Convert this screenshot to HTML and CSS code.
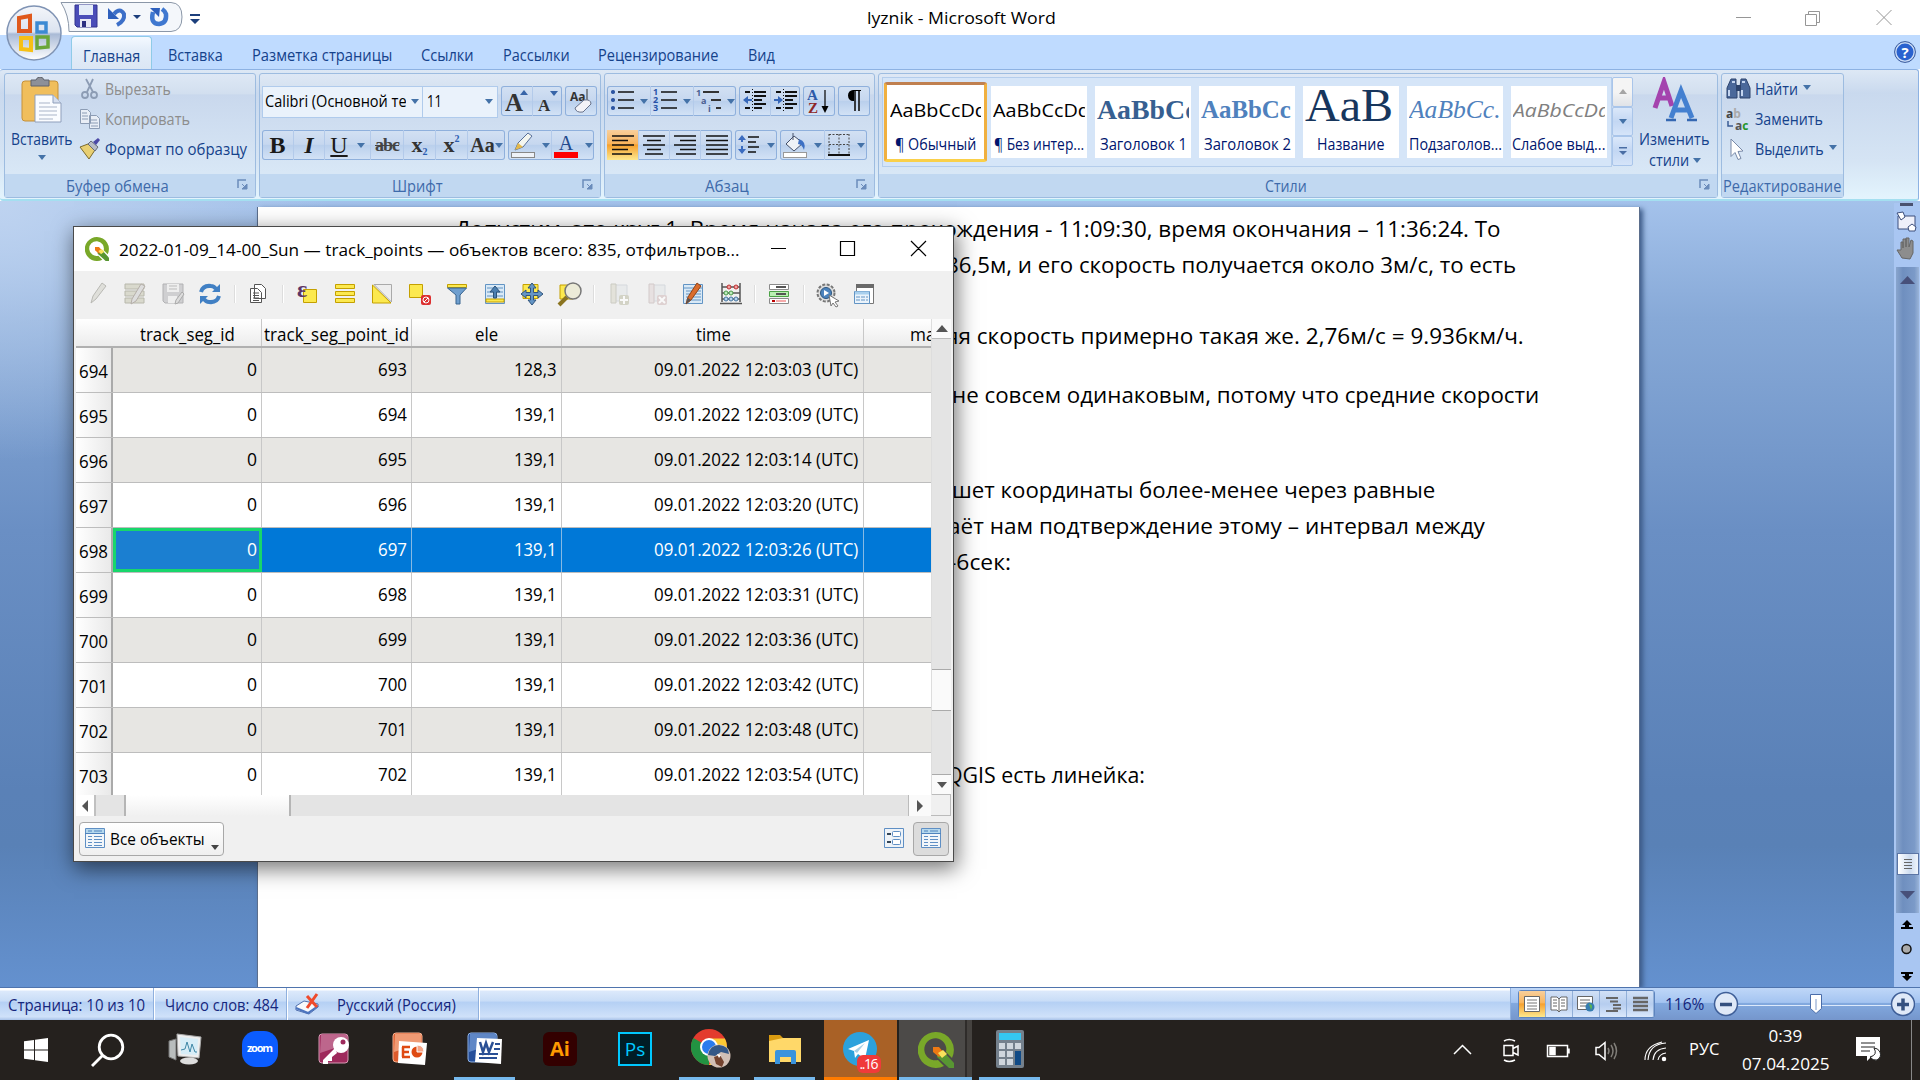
FILE: index.html
```html
<!DOCTYPE html>
<html lang="ru">
<head>
<meta charset="utf-8">
<title>lyznik - Microsoft Word</title>
<link rel="stylesheet" href="styles.css">
</head>
<body>
<div class="screen">
<header class="titlebar">
  <div class="qat">
    <svg width="130" height="35" viewBox="0 0 130 35"><path d="M1 2.500H111Q122 3 122 17T111 31.500H9Q9 15 1 2.500Z" fill="#f4f7fb" stroke="#8b97a8"/>
      <path d="M15 5h22v22h-20l-2-2z" fill="#4a4db8" stroke="#32358e"/><path d="M19 5h14v10H19z" fill="#e4ecf8"/><path d="M20 19h11v8H20z" fill="#e8e8f4"/><path d="M22 21h4v6h-4z" fill="#2d2f80"/>
      <path d="M54 14Q60 7 64 14Q65 21 57 25" fill="none" stroke="#3c6fc8" stroke-width="4"/><path d="M48 8v11h11z" fill="#2e60bd"/>
      <path d="M73 15h8l-4 4z" fill="#1c3f7c"/>
      <path d="M93 12Q90 24 99 24Q107 23 106 14Q105 11 102 9" fill="none" stroke="#3f78d0" stroke-width="4.500"/><path d="M90 8h10l-1 9z" fill="#2e60bd"/></svg>
    <svg class="qmore" width="12" height="12"><path d="M1 1h10v2H1zM1 6h10L6 11z" fill="#1c3f7c"/></svg>
  </div>
  <div class="apptitle"><span class="fit" data-w="189">lyznik - Microsoft Word</span></div>
  <svg class="winbtns" width="156" height="16" fill="none" stroke="#969696"><path d="M0 7.500h15M69.500 4.500h11v11h-11zM72.500 4.500v-3h11v11h-3M140.500 0l15 15M155.500 0l-15 15"/></svg>
</header>
<nav class="tabs">
  <div class="tab active"><span class="fit" data-w="57">Главная</span></div>
  <div class="tab"><span class="fit" data-w="55">Вставка</span></div>
  <div class="tab"><span class="fit" data-w="140">Разметка страницы</span></div>
  <div class="tab"><span class="fit" data-w="53">Ссылки</span></div>
  <div class="tab"><span class="fit" data-w="67">Рассылки</span></div>
  <div class="tab"><span class="fit" data-w="120">Рецензирование</span></div>
  <div class="tab"><span class="fit" data-w="27">Вид</span></div>
  <svg class="help" width="22" height="22"><circle cx="11" cy="11" r="9.500" fill="#2a62cf" stroke="#cbdcf5" stroke-width="2"/><circle cx="11" cy="11" r="10.400" fill="none" stroke="#33559a"/><text x="11" y="16.500" text-anchor="middle" font-size="15" font-weight="bold" fill="#fff">?</text></svg>
</nav>
<svg class="orb" width="58" height="58" viewBox="0 0 58 58"><defs><linearGradient id="orbg" x2="0" y2="1"><stop offset="0" stop-color="#f4f6fa"/><stop offset=".48" stop-color="#dbe3f0"/><stop offset=".52" stop-color="#a9bad6"/><stop offset="1" stop-color="#fff"/></linearGradient></defs><circle cx="29" cy="29" r="27" fill="url(#orbg)" stroke="#7f93b4" stroke-width="1.500"/><g fill="none" stroke-width="4"><path d="M14 14l11-2v15H14z" stroke="#e0591c"/><path d="M32 19h9v9h-9z" stroke="#3c8ad3" stroke-width="3.500"/><path d="M16 34h10v12l-10-1z" stroke="#f6c016"/><path d="M32 33h11v10l-11 1z" stroke="#6aa63a" stroke-width="3.500"/></g></svg>

<section class="ribbon">
  <div class="group g-clip">
    <div class="gbody clip">
      <div class="paste">
        <svg width="42" height="46" viewBox="0 0 42 46"><rect x="1" y="4" width="36" height="40" rx="3" fill="#f0be5c" stroke="#c5913a"/><path d="M10 3h5q1-3 4-3t4 3h5v6H10z" fill="#8d9098" stroke="#5e636c"/><path d="M14 18h18l8 8v19H14z" fill="#fafcff" stroke="#8f9fbb"/><path d="M32 18v8h8" fill="#d5deee" stroke="#8f9fbb"/><path d="M18 26h11M18 30h18M18 34h18M18 38h18M18 42h14" stroke="#a9b4c8"/></svg>
        <span class="fit" data-w="62">Вставить</span><i class="arr"></i>
      </div>
      <div class="clist">
        <div class="dis"><svg width="22" height="22" fill="none" stroke="#8c9cb4" stroke-width="1.800"><path d="M7 1l7 13M14 1L8 14"/><circle cx="6" cy="17" r="3"/><circle cx="15" cy="17" r="3"/></svg><span class="fit" data-w="66">Вырезать</span></div>
        <div class="dis"><svg width="22" height="22" fill="#e9eef6" stroke="#8c9cb4"><path d="M1.500 1.500h7l3 3v11h-10zM10.500 7.500h7l3 3v10h-10z"/><path d="M3 5h5M3 8h6M3 11h6M12 12h6M12 15h7M12 18h7"/></svg><span class="fit" data-w="85">Копировать</span></div>
        <div><svg width="22" height="22"><path d="M1 9l8-3 7 6-6 9z" fill="#e8cf72" stroke="#7b6a2c"/><path d="M9 6l3-3 7 6-3 4z" fill="#b8bcc6" stroke="#656a78"/><path d="M14 4l5-4 2 2-4 5z" fill="#4c49a6"/></svg><span class="fit" data-w="142">Формат по образцу</span></div>
      </div>
    </div>
    <div class="glabel"><span class="fit" data-w="103">Буфер обмена</span><svg class="launch" width="11" height="11"><use href="#launch"/></svg></div>
  </div>
  <div class="group g-font">
    <div class="gbody rows">
      <div class="row">
        <div class="combo c1"><span class="clipbox"><span class="fit" data-w="149">Calibri (Основной тек</span></span><i class="arr"></i></div>
        <div class="combo c2"><span class="fit" data-w="15">11</span><i class="arr"></i></div>
        <div class="bg m3"><b class="w31"><svg width="24" height="24"><text class="sf" x="0" y="22" font-size="25">A</text><path d="M15 6h8l-4-5z" fill="#3764a8"/></svg></b><b class="w30"><svg width="24" height="24"><text class="sf" x="2" y="22" font-size="17">A</text><path d="M14 2h8l-4 5z" fill="#3764a8"/></svg></b></div>
        <div class="bg m3"><b class="w32"><svg width="26" height="26"><text x="2" y="13" font-size="12" font-weight="bold" fill="#333">Aa</text><path d="M19 1v12" stroke="#333"/><path d="M7 20l9-8q7-1 7 4l-8 8q-7 1-8-4z" fill="#f3f3f8" stroke="#68728a"/></svg></b></div>
      </div>
      <div class="row second">
        <div class="bg serif"><b class="w31 bold">B</b><b class="w31 ital">I</b><b class="w48 und"><u>U</u><i class="arr"></i></b><b class="w33 small"><s>abc</s></b><b class="w32 xs">x<sub>2</sub></b><b class="w32 xs">x<sup>2</sup></b><b class="w37 aa">Aa<i class="arr"></i></b></div>
        <div class="bg m3"><b class="w43"><svg width="26" height="26"><path d="M5 18l3-7L18 1l4 3-9 11z" fill="#f4f6f0" stroke="#58709a"/><path d="M5 18l3-7 5 4z" fill="#e5b94b"/><rect x="1.500" y="20.500" width="23" height="5" fill="#eef2f8" stroke="#888"/></svg><i class="arr"></i></b><b class="w43"><svg width="26" height="26"><text class="sf2" x="13" y="18" text-anchor="middle" font-size="20">A</text><rect x="1" y="20" width="24" height="6" fill="red"/></svg><i class="arr"></i></b></div>
      </div>
    </div>
    <div class="glabel"><span class="fit" data-w="51">Шрифт</span><svg class="launch" width="11" height="11"><use href="#launch"/></svg></div>
  </div>
  <div class="group g-par">
    <div class="gbody rows">
      <div class="row first">
        <div class="bg"><b class="w44"><svg width="24" height="24" stroke="#111" stroke-width="1.500"><path d="M8 3h16M8 11h16M8 19h16"/><g fill="#3b6cc0" stroke="#274f9c"><circle cx="3" cy="3" r="1.300"/><circle cx="3" cy="11" r="1.300"/><circle cx="3" cy="19" r="1.300"/></g></svg><i class="arr"></i></b><b class="w44"><svg width="24" height="24"><path d="M8 3h16M8 11h16M8 19h16" stroke="#111" stroke-width="1.500"/><g font-size="9" font-weight="bold" fill="#2752a8"><text y="6">1</text><text y="14">2</text><text y="22">3</text></g></svg><i class="arr"></i></b><b class="w43"><svg width="26" height="24"><path d="M8 3h16M16 11h10M21 19h5" stroke="#333" stroke-width="1.800"/><g font-size="9" font-weight="bold" fill="#4a5f91"><text x="1" y="7">1</text><text x="6" y="15">a</text><text x="13" y="23">i</text></g></svg><i class="arr"></i></b></div>
        <div class="bg m3"><b class="w31"><svg width="24" height="24" stroke="#111" stroke-width="2"><path d="M2 3h5M11 3h12M11 7h12M11 11h8M2 19h5M11 15h12M11 19h8"/><path d="M2 11h7" stroke="#3566b8"/><path d="M5 7l-5 4 5 4z" fill="#3566b8" stroke="none"/><path d="M9.500 0v23" stroke-dasharray="1 2" stroke-width="1"/></svg></b><b class="w30"><svg width="24" height="24" stroke="#111" stroke-width="2"><path d="M2 3h5M11 3h12M11 7h12M11 11h8M2 19h5M11 15h12M11 19h8"/><path d="M0 11h6" stroke="#3566b8"/><path d="M4 7l5 4-5 4z" fill="#3566b8" stroke="none"/><path d="M9.500 0v23" stroke-dasharray="1 2" stroke-width="1"/></svg></b></div>
        <div class="bg m3"><b class="w32"><svg width="24" height="26"><text x="0" y="12" class="sf3" fill="#2d5aa8">A</text><text x="1" y="25" class="sf3" fill="#8e2727">Z</text><path d="M18 2v18" stroke="#111" stroke-width="1.300"/><path d="M14.500 18h7L18 25z"/></svg></b></div>
        <div class="bg m3"><b class="w32"><svg width="20" height="24"><path d="M15 2v20M11 2v20" stroke="#111" stroke-width="1.600"/><path d="M17 1H9a5 5.500 0 0 0 0 11h1V2h7z"/></svg></b></div>
      </div>
      <div class="row second">
        <div class="bg"><b class="w31 on"><svg width="24" height="22" class="ln"><path d="M1 2h22M1 6.500h16M1 11h22M1 15.500h16M1 20h20"/></svg></b><b class="w31"><svg width="24" height="22" class="ln"><path d="M1 2h22M5 6.500h14M1 11h22M5 15.500h14M3 20h18"/></svg></b><b class="w31"><svg width="24" height="22" class="ln"><path d="M1 2h22M7 6.500h16M1 11h22M7 15.500h16M3 20h20"/></svg></b><b class="w32"><svg width="24" height="22" class="ln"><path d="M1 2h22M1 6.500h22M1 11h22M1 15.500h22M1 20h22"/></svg></b></div>
        <div class="bg m3"><b class="w42"><svg width="24" height="24"><path d="M11 4h11M11 9h8M11 14h11M11 19h8" stroke="#111" stroke-width="1.600"/><path d="M5 4v15" stroke="#3b6cc0" stroke-width="2" stroke-dasharray="5 4"/><path d="M1 7l4-5 4 5zM1 16l4 5 4-5z" fill="#3b6cc0"/></svg><i class="arr"></i></b></div>
        <div class="bg m3"><b class="w44"><svg width="26" height="26"><path d="M4 12l8-8 9 7-9 8z" fill="#eef2f7" stroke="#44506a"/><path d="M11 8V1" stroke="#44506a"/><path d="M17 7q8 3 5 11-2-6-6-6z" fill="#3c6fc4"/><rect x="1.500" y="20.500" width="23" height="5" fill="#fff" stroke="#999"/></svg><i class="arr"></i></b><b class="w43"><svg width="24" height="24" fill="none" stroke="#444" stroke-dasharray="2 1.500"><path d="M2 1v20M12 1v20M22 1v20M2 1.500h20M2 11.500h20"/><path d="M1 22h22" stroke="#111" stroke-width="2" stroke-dasharray="none"/></svg><i class="arr"></i></b></div>
      </div>
    </div>
    <div class="glabel"><span class="fit" data-w="44">Абзац</span><svg class="launch" width="11" height="11"><use href="#launch"/></svg></div>
  </div>
  <div class="group g-sty">
    <div class="gbody styles">
      <div class="gallery">
        <div class="sty sel"><div class="smp"><span class="fit" data-w="97">AaBbCcDd</span></div><span class="fit sn" data-w="81">¶ Обычный</span></div>
        <div class="sty"><div class="smp"><span class="fit" data-w="97">AaBbCcDd</span></div><span class="fit sn" data-w="90">¶ Без интер...</span></div>
        <div class="sty h1"><div class="smp"><span class="fit" data-w="101">AaBbCc</span></div><span class="fit sn" data-w="87">Заголовок 1</span></div>
        <div class="sty h2"><div class="smp"><span class="fit" data-w="90">AaBbCc</span></div><span class="fit sn" data-w="87">Заголовок 2</span></div>
        <div class="sty tt"><div class="smp"><span class="fit" data-w="88">AaB</span></div><span class="fit sn" data-w="67">Название</span></div>
        <div class="sty st"><div class="smp"><span class="fit" data-w="92">AaBbCc.</span></div><span class="fit sn" data-w="93">Подзаголов...</span></div>
        <div class="sty em"><div class="smp"><span class="fit" data-w="97">AaBbCcDd</span></div><span class="fit sn" data-w="93">Слабое выд...</span></div>
      </div>
      <div class="gscroll"><b class="off"><svg width="8" height="5"><path d="M0 5h8L4 0z" fill="#a5a5a5"/></svg></b><b><i class="arr"></i></b><b><svg width="10" height="10"><path d="M1 1h8v1.500H1zM1 5h8L5 9z" fill="#4a6ea5"/></svg></b></div>
      <div class="chg"><svg width="46" height="46" viewBox="0 0 46 46"><g fill="none" stroke-width="5"><path d="M4 31L13 5l8 24M8 21h10" stroke="#a443ae"/><path d="M20 41L30 14l11 27M24 33h13" stroke="#4480d0"/></g><path d="M15 43h10M36 43h10" stroke="#3568b2" stroke-width="2.500"/></svg><span class="fit" data-w="70">Изменить</span><span class="l2"><span class="fit" data-w="40">стили</span><i class="arr"></i></span></div>
    </div>
    <div class="glabel"><span class="fit" data-w="42">Стили</span><svg class="launch" width="11" height="11"><use href="#launch"/></svg></div>
  </div>
  <div class="group g-edit">
    <div class="gbody elist">
      <div><svg width="25" height="22"><path d="M5 1h5v5l1 3v11H1V10z" fill="#4a689a" stroke="#2c436d"/><path d="M15 1h5l4 9v10H14V9z" fill="#4a689a" stroke="#2c436d"/><path d="M10 7h5v6h-5z" fill="#2c436d"/><path d="M3 12v6M16 12v6M6 4h3M16 4h3" stroke="#c3d4ef" stroke-width="2"/></svg><span class="fit" data-w="43">Найти</span><i class="arr"></i></div>
      <div><svg width="25" height="24"><text x="0" y="11" font-size="12" font-weight="bold" fill="#444">a<tspan fill="#aaa">b</tspan></text><text x="9" y="23" font-size="12" font-weight="bold" fill="#555">a<tspan fill="#24962c">c</tspan></text><path d="M2 14v5h5" fill="none" stroke="#3b5c94" stroke-width="1.500"/></svg><span class="fit" data-w="68">Заменить</span></div>
      <div><svg width="25" height="24"><path d="M5 2l12 12-5 .500 3 7-3 1-3-7-4 4z" fill="#fff" stroke="#7889a8"/></svg><span class="fit" data-w="69">Выделить</span><i class="arr"></i></div>
    </div>
    <div class="glabel"><span class="fit" data-w="118">Редактирование</span></div>
  </div>
</section>

<main class="work">
  <article class="page">
    <p><span class="fit" data-w="1046">Допустим, это круг 1. Время начала его прохождения - 11:09:30, время окончания – 11:36:24. То</span></p>
    <p class="off"><span class="fit" data-w="570">86,5м, и его скорость получается около 3м/с, то есть</span></p>
    <p class="off g35"><span class="fit" data-w="578">яя скорость примерно такая же. 2,76м/с = 9.936км/ч.</span></p>
    <p class="off g24 s6"><span class="fit" data-w="587">не совсем одинаковым, потому что средние скорости</span></p>
    <p class="off g59 s7"><span class="fit" data-w="483">шет координаты более-менее через равные</span></p>
    <p class="off s2"><span class="fit" data-w="537">аёт нам подтверждение этому – интервал между</span></p>
    <p class="off s4"><span class="fit" data-w="62">-6сек:</span></p>
    <p class="off g178"><span class="fit" data-w="199">QGIS есть линейка:</span></p>
  </article>
  <aside class="vs">
    <svg width="26" height="64"><path d="M6 0h13v3H6z" fill="#4a5270"/><path d="M4 13h17v13H4z" fill="#eef0fa" stroke="#3d4f7c"/><path d="M3 10l6-1 2 5-4 3zM14 24l4-3 4 3-1 4h-6z" fill="#fff" stroke="#3d4f7c"/><path d="M8 55L3 47l4 0V39h2v6V36h3v8V35h3v9l2-7 2 1v12l-3 6z" fill="#8d8d8d" stroke="#666"/></svg>
    <div class="track"><svg width="16" height="9"><path d="M0 8h15L7.500 0z" fill="#47507a"/></svg><div class="vthumb"><i></i><i></i><i></i><i></i></div><svg width="16" height="9"><path d="M0 0h15L7.500 8z" fill="#47507a"/></svg></div>
    <div class="vnav"><svg width="26" height="76"><path d="M8 12l5-5 5 5h-3v2h4v2H7v-2h4v-2zM7 59h12v2h-4v2h3l-5 5-5-5h3v-2H7z"/><circle cx="12.500" cy="36" r="4.500" fill="#aaa" stroke="#111" stroke-width="1.500"/></svg></div>
  </aside>
</main>

<footer class="status">
  <div class="st1"><span class="fit" data-w="137">Страница: 10 из 10</span></div>
  <div class="st2"><span class="fit" data-w="113">Число слов: 484</span></div>
  <div class="st3"><svg width="26" height="24"><path d="M1 13l8-5 14 3v3l-9 7-13-4z" fill="#f7f9fc" stroke="#4f6fae"/><path d="M1 15l12 5 10-7" fill="none" stroke="#4b74bf" stroke-width="2"/><path d="M12 3l10 11M22 1L12 15" stroke="#ef4a2c" stroke-width="3"/></svg><span class="fit" data-w="119">Русский (Россия)</span></div>
  <div class="st4"></div>
  <div class="zone">
    <div class="views"><b class="on"><svg width="18" height="18"><path d="M1.500 1.500h15v15h-15z" fill="#fff" stroke="#666"/><path d="M4 5h10M4 8h10M4 11h10M4 14h10" stroke="#777"/></svg></b><b><svg width="18" height="18"><path d="M1 2h6l2 2 2-2h6v13h-6l-2 2-2-2H1z" fill="#fff" stroke="#666"/><path d="M3 5h4M3 8h4M3 11h4M11 5h4M11 8h4M11 11h4M9 4v12" stroke="#666"/></svg></b><b><svg width="20" height="18"><path d="M1.500 1.500h15v13h-15z" fill="#fff" stroke="#666"/><path d="M4 5h10M4 8h10M4 11h6" stroke="#666"/><circle cx="14" cy="12" r="4.500" fill="#367db0"/><path d="M13 9q5 0 2 6z" fill="#58b454"/></svg></b><b><svg width="18" height="18"><path d="M2 3h12M6 6.500h8M9 10h8M9 13.500h8M2 16h12" stroke="#666" stroke-width="1.800"/></svg></b><b><svg width="18" height="18"><path d="M2 3h15M2 7h15M2 11h15M2 15h15" stroke="#666" stroke-width="2.500"/></svg></b></div>
    <span class="fit pct" data-w="39">116%</span>
    <svg width="204" height="30"><path d="M26 16.500h160" stroke="#dce9fb"/><g fill="#dfe9f8" stroke="#3f5f98" stroke-width="1.500"><circle cx="15" cy="15" r="11.500"/><circle cx="192" cy="15" r="11.500"/></g><path d="M9 15.500h12M186 15.500h12M192 9.500v12" stroke="#34507f" stroke-width="3.500"/><path d="M99.500 5.500h11v14l-5.500 5-5.500-5z" fill="#fff" stroke="#4a6daa"/><path d="M105 10v11" stroke="#7c99c9"/></svg>
  </div>
</footer>

<footer class="taskbar">
  <b class="tk"><svg width="24" height="24" fill="#fff"><path d="M0 3.300l10-1.400v9.600H0zM11 1.800L24 0v11.500H11zM0 12.500h10v9.600L0 20.700zM11 12.500h13V24l-13-1.800z"/></svg></b>
  <b class="tk srch"><svg width="34" height="34" fill="none" stroke="#fff" stroke-width="2.800"><circle cx="20" cy="14" r="11.800"/><path d="M12 22L1 33"/></svg></b>
  <b class="tk"><svg width="34" height="32"><path d="M1 8l7-2v21l-7-3z" fill="#b9bdbd" stroke="#777"/><path d="M9 1l24 3-2 21-21-2z" fill="#eee" stroke="#aaa"/><path d="M12 4l18 2-1 16-16-1z" fill="#d7edf7"/><path d="M13 17l4-1 2-7 3 10 2-8 3 8h2" fill="none" stroke="#3f87a6"/><ellipse cx="21" cy="28" rx="9" ry="3.500" fill="#ddd"/></svg></b>
  <b class="tk"><svg width="36" height="36"><rect width="36" height="36" rx="14" fill="#0b5cff"/><text x="18" y="21" text-anchor="middle" font-size="11" font-weight="bold" fill="#fff" textLength="26">zoom</text></svg></b>
  <b class="tk"><svg width="34" height="32"><rect x="1" y="1" width="29" height="29" rx="3" fill="#9e2a5c" stroke="#d99ab5"/><path d="M3 2h26v9L2 20z" fill="#bd668c"/><path d="M17 15L5 27v4h5v-3h4v-4l5-4" fill="#fff"/><circle cx="23" cy="12" r="8" fill="#fff"/><circle cx="25" cy="9" r="2.500" fill="#9e2a5c"/></svg></b>
  <b class="tk"><svg width="36" height="34"><rect x="1" y="1" width="29" height="29" rx="3" fill="#dd5b2c" stroke="#f3b190"/><path d="M3 2h26v9L2 20z" fill="#ef9a74"/><path d="M7 9l28 2-2 22-27-2z" fill="#fff"/><path d="M10 15h8M10 20h7M10 25h8M11 15v10" stroke="#df4a12" stroke-width="2.500"/><circle cx="25" cy="20" r="5.500" fill="#df4a12"/><path d="M25 20V13q7 0 7 7z" fill="#f4a587" stroke="#fff"/></svg></b>
  <b class="tk run"><svg width="36" height="34"><rect x="1" y="1" width="29" height="29" rx="3" fill="#264f9a" stroke="#8fb2e4"/><path d="M3 2h26v9L2 20z" fill="#5f87c6"/><path d="M10 6l25 1-1 25-26-2z" fill="#fff"/><path d="M13 10l3 10 3-9 3 9 4-10" fill="none" stroke="#2a4f94" stroke-width="2.500"/><path d="M12 22h19M12 26h18M27 17h6M28 12h5" stroke="#2a4f94" stroke-width="2"/></svg></b>
  <b class="tk"><svg width="34" height="34"><rect width="34" height="34" rx="6" fill="#330000"/><text x="17" y="24" text-anchor="middle" font-size="20" font-weight="bold" fill="#ff9a00">Ai</text></svg></b>
  <b class="tk"><svg width="34" height="34"><rect x="1" y="1" width="32" height="32" fill="#001d26" stroke="#00c8ff" stroke-width="2"/><text x="17" y="24" text-anchor="middle" font-size="19" font-weight="500" fill="#00c8ff">Ps</text></svg></b>
  <b class="tk run r1"><svg width="40" height="40" viewBox="0 0 40 40"><circle cx="18" cy="18" r="18" fill="#e33b2e"/><path d="M18 18L2.400 9A18 18 0 0 0 18 36z" fill="#229342"/><path d="M18 9.500h15.800A18 18 0 0 1 18 36L26 22z" fill="#fcc934"/><circle cx="18" cy="18" r="9" fill="#fff"/><circle cx="18" cy="18" r="7" fill="#2a7bee"/><circle cx="28" cy="27" r="11.500" fill="#d2c0b6"/><path d="M17 26q2-10 11-10 10 1 10 9l-8-2-6 4z" fill="#355887"/><path d="M23 28l6-2 4 7-2 5-6-3z" fill="#74432f"/><path d="M26 25l4 1-2 3z" fill="#fff"/></svg></b>
  <b class="tk run"><svg width="34" height="30"><path d="M1 1h11l3 3v6H1z" fill="#d99b10"/><path d="M1 7l14-3h18v24H1z" fill="#ffd869"/><path d="M7 30V18q0-2 2-2h17q2 0 2 2v12h-5v-7H12v7z" fill="#3a93dd"/></svg></b>
  <b class="tk tg"><svg width="42" height="42"><circle cx="18" cy="18" r="17" fill="#2ca1dc"/><path d="M6 18l21-9-4 19-7-5-3 4-1-7z" fill="#fff"/><path d="M12 20l11-8-8 10z" fill="#a7cfe5"/><rect x="15" y="24" width="24" height="18" rx="6" fill="#f03a3a"/><text x="27" y="38" text-anchor="middle" font-size="14" fill="#fff" textLength="19">..16</text></svg></b>
  <b class="tk qg"><svg width="36" height="36" viewBox="0 0 36 36"><use href="#qgis"/></svg></b>
  <b class="tk run"><svg width="28" height="38"><rect width="28" height="38" rx="2" fill="#74808c"/><rect x="3" y="3" width="22" height="7" fill="#35c7f3"/><g fill="#cfd6dd"><path d="M3 13h6v6H3zM11 13h6v6h-6zM19 13h6v6h-6zM3 21h6v6H3zM11 21h6v6h-6zM3 29h6v6H3zM11 29h6v6h-6z"/></g><path d="M19 21h6v14h-6z" fill="#104a86"/></svg></b>
  <div class="tray">
    <svg width="220" height="30" fill="none" stroke="#fff" stroke-width="1.500"><path d="M1 19l8.500-8.500L18 19"/><path d="M51 10.500h9v10h-9zM60 13.500l5-2.500v9l-5-2.500M51 6q5-3 11 0M51 25q5 3 11 0"/><path d="M94.500 10.500h20v11h-20zM116 13.500v5"/><path d="M97 12.500h5v7h-5z" fill="#fff"/><path d="M143 12.500h3l6-5v17l-6-5h-3z"/><path d="M155 13q2 3 0 6M158 10q4 6 0 12M161 8q5 8 0 16" stroke="#817e79"/><g transform="translate(191 3)"><path d="M4 22Q5 6 22 5M9 22Q10 11 22 10M14 22Q15 16 22 15M1 22Q1 8 18 4" stroke-width="1.100"/><circle cx="20" cy="21" r="1.500" fill="#fff"/></g></svg>
    <span class="fit lang" data-w="30">РУС</span>
    <div class="clock"><span class="fit" data-w="34">0:39</span><span class="fit" data-w="88">07.04.2025</span></div>
    <svg width="26" height="26"><path d="M0 0h24v19H16l-5 5v-5H0z" fill="#fff"/><path d="M5 6h14M5 10h14M5 14h9" stroke="#222"/><path d="M18 11q4 7-4 9 3 4 7 3 5-3 3-8-2-4-6-4z" fill="#fff" stroke="#222"/></svg>
    <i class="peek"></i>
  </div>
</footer>

<section class="dialog">
  <div class="dtitle">
    <svg width="24" height="24" viewBox="0 0 36 36"><use href="#qgis"/></svg>
    <span class="fit" data-w="621">2022-01-09_14-00_Sun — track_points — объектов всего: 835, отфильтров...</span>
    <svg class="dbtn" width="158" height="18" fill="none" stroke="#000" stroke-width="1.200"><path d="M1 8.500h15M70.500 1.500h14v14h-14zM141 1l15 15M156 1l-15 15"/></svg>
  </div>
  <div class="dtools" id="tools">
    <b><svg><path d="M4 20l2-7L15 0l4 3L9 16z" fill="#dfdfda" stroke="#b9b9b4"/></svg></b>
    <b><svg><g fill="#d9d9cd" stroke="#b8b8ac"><path d="M1 1h19v5H1zM1 8h19v5H1zM1 15h19v5H1z"/></g><path d="M7 21l1-5L17 1l4 2-9 15z" fill="#ddd" stroke="#b5afa9"/></svg></b>
    <b><svg><path d="M1 1h20v19H3l-2-2z" fill="#cfcfd1" stroke="#b2b2b4"/><path d="M5 1h12v8H5zM6 13h9v7H6z" fill="#eee"/><path d="M7 3h8M7 6h8" stroke="#bbb"/><path d="M13 21l1-4 6-8 2 2-6 9z" fill="#ddd" stroke="#aaa"/></svg></b>
    <b><svg fill="none" stroke="#4180c4" stroke-width="4"><path d="M2 9q2-7 10-6 3 0 5 3M20 13q-2 7-10 6-3 0-5-3"/><path d="M21 1v8h-8zM1 21v-8h8z" fill="#4180c4" stroke="none"/></svg></b>
    <i class="sep"></i>
    <b><svg fill="#fff" stroke="#555"><path d="M6.500 1.500h7l4 4v10h-11zM2.500 5.500h7l4 4v10h-11z"/><path d="M5 10h6M5 12.500h6M5 15h6M5 17.500h6"/></svg></b>
    <i class="sep"></i>
    <b><svg><path d="M7.500 6.500h13v13h-13z" fill="#fce94f" stroke="#c4a000"/><text x="1" y="14" class="eps">ε</text></svg></b>
    <b><svg fill="#fce94f" stroke="#c4a000"><path d="M1.500 1.500h19v4h-19zM1.500 8.500h19v4h-19zM1.500 15.500h19v4h-19z"/></svg></b>
    <b><svg><path d="M1.500 2v18H20z" fill="#fce94f" stroke="#c4a000"/><path d="M3 1.500h17.500V19z" fill="#eee" stroke="#aaa"/></svg></b>
    <b><svg><path d="M.500 1.500h13v13H.500z" fill="#fce94f" stroke="#c4a000"/><rect x="12" y="12" width="10" height="10" rx="2" fill="#dc3030"/><circle cx="17" cy="17" r="3" fill="none" stroke="#fff"/><path d="M15 19l4-4" stroke="#fff"/></svg></b>
    <b><svg><path d="M1.500 1.500h19v3h-19z" fill="#fce94f" stroke="#c4a000"/><path d="M1.500 5h19L14 12v9h-4v-9z" fill="#6f9fcf" stroke="#39648f"/></svg></b>
    <b><svg><path d="M1.500 1.500h19v19h-19z" fill="#d9e9f6" stroke="#6294c4"/><path d="M3 5h16M3 9h16M3 13h16" stroke="#6294c4"/><path d="M2 16h18v3H2z" fill="#fce94f" stroke="#c4a000"/><path d="M9.500 15V9H6l5-6 5 6h-3.500v6z" fill="#4b7fb1" stroke="#2d5379"/></svg></b>
    <b><svg><path d="M2 1.500h15v14H2z" fill="#fce94f" stroke="#c4a000"/><path d="M11 0l4 5h-2.500v4.500H17V7l5 4-5 4v-2.500h-4.500V17H15l-4 5-4-5h2.500v-4.500H5V15l-5-4 5-4v2.500h4.500V5H7z" fill="#6495c5" stroke="#31557c"/></svg></b>
    <b><svg width="24"><path d="M1 2h13v14H1z" fill="#fce94f" stroke="#c4a000"/><path d="M0 22l8-8" stroke="#8b7420" stroke-width="4"/><circle cx="14" cy="8" r="8" fill="#ecebd8" stroke="#777" stroke-width="1.500"/></svg></b>
    <i class="sep"></i>
    <b><svg opacity=".65"><path d="M7 2h13v16H7z" fill="#e4e7e9" stroke="#c7cdd3"/><path d="M4 1h5v19H4z" fill="#dddccf" stroke="#b9b8ac"/><rect x="12" y="12" width="10" height="10" rx="2" fill="#c5c4b1"/><path d="M17 13v8M13 17h8" stroke="#fff" stroke-width="2"/></svg></b>
    <b><svg opacity=".65"><path d="M7 2h13v16H7z" fill="#e4e7e9" stroke="#c7cdd3"/><path d="M4 1h5v19H4z" fill="#e3dada" stroke="#c4b6b6"/><rect x="12" y="12" width="10" height="10" rx="2" fill="#d5c2c2"/><path d="M14 14l6 6M20 14l-6 6" stroke="#fff" stroke-width="2"/></svg></b>
    <b><svg><path d="M1.500 1.500h19v19h-19z" fill="#d9e9f6" stroke="#6294c4"/><path d="M2 5h18M4 8h15M4 11h15M4 14h15M4 17h15" stroke="#6294c4"/><path d="M4 21l2-7L15 0l4 3L9 17z" fill="#d96c2d" stroke="#914317"/><path d="M4 21l2-6 3 2z" fill="#555"/></svg></b>
    <b><svg fill="none" stroke="#555"><path d="M2 0v19M20 0v19M2 4h18M2 10h18M2 16h18M0 20.500h22" stroke-width="1.500"/><g fill="#f3a0a0" stroke="#bd3030"><circle cx="9" cy="4" r="2"/><circle cx="16" cy="4" r="2"/></g><g fill="#bdebbd" stroke="#4b9a4b"><circle cx="6" cy="10" r="2"/><circle cx="11" cy="10" r="2"/></g><g fill="#b7d4ef" stroke="#46759f"><circle cx="6" cy="16" r="2"/><circle cx="11" cy="16" r="2"/><circle cx="16" cy="16" r="2"/></g></svg></b>
    <i class="sep"></i>
    <b><svg><g fill="#fff" stroke="#8a8a8a"><path d="M1.500 1.500h19v5h-19zM1.500 15.500h19v5h-19z"/><path d="M1.500 8.500h19v5h-19z" fill="#baf0b2" stroke="#4ba346"/></g><path d="M8 4h10M8 11h10" stroke="#555" stroke-width="2"/><path d="M4 18h3" stroke="#b00" stroke-width="2"/><path d="M8 18h10" stroke="#f5aaaa" stroke-width="2"/></svg></b>
    <i class="sep"></i>
    <b><svg><circle cx="9" cy="10" r="8.500" fill="#ddd" stroke="#777" stroke-width="2" stroke-dasharray="3 1.500"/><circle cx="9" cy="10" r="5.500" fill="#4c83bd" stroke="#2d5780"/><path d="M7 7l5 3-5 3z" fill="#fff"/><path d="M12 12l10 6-4 1 3 4-2 1-3-4-2 3z" fill="#fff" stroke="#777"/></svg></b>
    <b><svg><path d="M2.500 2.500h17v18h-17z" fill="#fff" stroke="#777"/><path d="M2 1h18v4H2z" fill="#6a6a6a"/><path d="M.500 8.500h15v12h-15z" fill="#eaf3fb" stroke="#6294c4"/><path d="M1 10h14" stroke="#a9d0ee" stroke-width="3"/><path d="M2 14h12M2 17h12" stroke="#6294c4" stroke-dasharray="4 1"/></svg></b>
  </div>
  <div class="grid">
    <div class="tbl" id="tbl">
      <div class="tr th"><div class="rh"></div><div class="c1"><span class="fit" data-w="95">track_seg_id</span></div><div class="c2"><span class="fit" data-w="145">track_seg_point_id</span></div><div class="c3"><span class="fit" data-w="23">ele</span></div><div class="c4"><span class="fit" data-w="35">time</span></div><div class="c5"><span class="fit" data-w="60">magvar</span></div></div>
    </div>
    <div class="dv"><b><svg width="12" height="7"><path d="M0 7h12L6 0z" fill="#555"/></svg></b><div class="dvt"></div><div class="dvk"></div><div class="dvt2"></div><b><svg width="10" height="6"><path d="M0 0h10L5 6z" fill="#555"/></svg></b></div>
  </div>
  <div class="dh"><b class="hl"><svg width="6" height="12"><path d="M6 0v12L0 6z" fill="#555"/></svg></b><div class="ht"></div><div class="hk"></div><div class="hr"></div><b class="hb"><svg width="6" height="12"><path d="M0 0v12l6-6z" fill="#555"/></svg></b><div class="hc"></div></div>
  <div class="dfoot">
    <div class="allobj"><svg width="20" height="20"><use href="#tblico"/></svg><span class="fit" data-w="95">Все объекты</span><svg class="dn" width="8" height="5"><path d="M0 0h8L4 5z" fill="#444"/></svg></div>
    <div class="fmode"><svg width="20" height="20" fill="#fff" stroke="#5f8fc4"><path d="M.500.500h19v19H.500z" fill="#eef3f8"/><rect x="8.500" y="3.500" width="8" height="5" rx="1"/><rect x="8.500" y="11.500" width="8" height="5" rx="1"/><path d="M3 6h4M3 14h4" stroke="#345" stroke-width="2"/></svg></div>
    <div class="tmode"><svg width="20" height="20"><use href="#tblico"/></svg></div>
  </div>
</section>
</div>
<svg width="0" height="0" class="defs">
  <symbol id="launch" viewBox="0 0 11 11"><path d="M1 9V1h8" fill="none" stroke="#6b8cbb" stroke-width="1.500"/><path d="M10 5v5H5zM5 5l4 4" stroke="#6b8cbb" fill="#6b8cbb"/></symbol>
  <symbol id="qgis" viewBox="0 0 36 36"><path d="M18 0a18 18 0 1 0 8 34l-6-6a11 11 0 1 1 8-8l6 6A18 18 0 0 0 18 0z" fill="#79a829"/><path d="M19 19h6l11 12v5h-5L19 25z" fill="#589632"/><path d="M15 15h6l5 6-5 4-6-5z" fill="#ee7913"/><path d="M20 21l5-3 4 4-5 4z" fill="#f8e25c"/></symbol>
  <symbol id="tblico" viewBox="0 0 20 20"><path d="M.500.500h19v19H.500z" fill="#f2f6fa" stroke="#5f8fc4"/><path d="M1 1h18v4H1z" fill="#b5d8ee"/><path d="M3 3h4M9 3h8M0 5.500h20" stroke="#4f83bd"/><path d="M3 8.500h4M9 8.500h8M3 11.500h4M9 11.500h8M3 14.500h4M9 14.500h8M3 17.500h4M9 17.500h8" stroke="#5f8fc4"/></symbol>
</svg>
<script src="app.js"></script>
</body>
</html>
```
FILE: styles.css
```css
* { box-sizing: border-box; }
body { margin: 0; font-family: "Open Sans", "Noto Sans", sans-serif; font-size: 15.5px; color: #000; overflow: hidden; }
.screen { position: relative; width: 1920px; height: 1080px; display: flex; flex-direction: column; overflow: hidden; }
.fit { display: inline-block; white-space: pre; transform-origin: 0 50%; flex: none; }
b { font-weight: normal; display: flex; align-items: center; justify-content: center; }
i { display: block; font-style: normal; }
svg { flex: none; display: block; }
.defs { position: absolute; }
.arr { width: 0; height: 0; border: 4px solid transparent; border-top: 5px solid #4472a8; border-bottom: 0; flex: none; }

.titlebar { height: 35px; background: #fff; display: flex; align-items: center; padding-right: 28px; flex: none; }
.qat { width: 867px; padding-left: 60px; display: flex; align-items: center; height: 35px; }
.qmore { margin: 2px 0 0 -1px; }
.apptitle { flex: 1; font-size: 16px; padding-top: 1px; }
.tabs { height: 34px; background: #bfdbff; display: flex; align-items: center; flex: none; color: #15428b; font-size: 16px; padding-left: 71px; }
.tab { margin-right: 29px; height: 34px; display: flex; align-items: center; padding-top: 6px; }
.tab.active { width: 81px; height: 34px; justify-content: center; margin: 2px 16px 0 0; padding-top: 4px; background: linear-gradient(#f4f9ff, #e3edf9 40%, #dbe6f4); border: 1px solid #8fcbe8; border-bottom: 0; border-radius: 4px 4px 0 0; }
.help { margin-left: auto; margin-right: 4px; }
.orb { position: absolute; left: 5px; top: 4px; }

.ribbon { height: 132px; flex: none; margin-right: 1px; padding: 3px 0 1px 4px; display: flex; gap: 3px; border: 1px solid #8db2e3; border-width: 1px 1px 2px 0; border-bottom-color: #a4dff0; border-radius: 3px; background: linear-gradient(#dde8f5, #c9d9ee 18%, #d5e4f4 70%, #e3f4fd); color: #15428b; }
.group { border: 1px solid #9dbce0; border-radius: 3px; display: flex; flex-direction: column; background: linear-gradient(#dee8f5, #d2dfef 16%, #c9d8ed 17%, #d8e7f6 80%); height: 125px; }
.g-clip { width: 252px; } .g-font { width: 342px; } .g-par { width: 271px; } .g-sty { width: 840px; } .g-edit { width: 123px; }
.gbody { height: 100px; display: flex; }
.glabel { height: 23px; background: #c1d8f1; display: flex; justify-content: center; align-items: center; color: #3e6aaa; padding: 1px 25px 0 0; position: relative; }
.g-edit .glabel { padding-right: 0; }
.launch { position: absolute; right: 7px; top: 5px; }
.paste { width: 74px; display: flex; flex-direction: column; align-items: center; padding-top: 3px; line-height: 20px; }
.paste .fit { margin-top: 6px; }
.paste .arr { margin-top: 6px; }
.clist > div { display: flex; align-items: center; height: 30px; gap: 4px; }
.dis { color: #8d8d8d; }
.rows { flex-direction: column; padding: 12px 0 0 2px; }
.row { display: flex; height: 32px; }
.second { margin-top: 12px; }
.m3 { margin-left: 3px; }
.bg { display: flex; flex: none; height: 30px; box-shadow: inset 0 0 0 1px #8fb0dc; border-radius: 3px; background: linear-gradient(#d3e1f3, #c6d7ef 48%, #b9cfec 50%, #d4e3f6); }
.bg b { border-left: 1px solid #b3caea; gap: 6px; color: #1a1a1a; flex: none; }
.bg b:first-child { border-left: 0; }
.w30 { width: 30px; } .w31 { width: 31px; } .w32 { width: 32px; } .w33 { width: 33px; } .w37 { width: 38px; } .w42 { width: 42px; } .w43 { width: 43px; } .w44 { width: 44px; } .w48 { width: 46px; }
.first .w44 { width: 43px; }
.combo { height: 32px; background: #eaf2fb; border: 1px solid #b0cbec; display: flex; align-items: center; justify-content: space-between; padding: 0 3px 2px 2px; color: #000; }
.c1.combo { width: 161px; } .c2.combo { width: 75px; border-left: 0; padding: 0 4px 2px 4px; }
.clipbox { width: 141px; overflow: hidden; height: 22px; }
.serif b { font-family: "Liberation Serif", serif; font-size: 24px; gap: 9px; line-height: 28px; }
.serif .bold, .ital { font-weight: bold; }
.serif .ital { font-style: italic; }
.serif .small { font-size: 18px; font-weight: bold; color: #444; letter-spacing: -1px; }
.serif .xs { font-size: 22px; font-weight: bold; gap: 0; color: #333; }
.xs sub, .xs sup { font-size: 10px; color: #2a5db0; line-height: 10px; }
.xs sub { margin-top: 14px; } .xs sup { margin-bottom: 12px; }
.serif .aa { font-size: 20px; font-weight: bold; gap: 0; color: #333; }
.sf { font-family: "Liberation Serif", serif; font-weight: bold; fill: #333; }
.sf2 { font-family: "Liberation Serif", serif; fill: #234a8c; }
.sf3 { font-family: "Liberation Serif", serif; font-size: 15px; font-weight: bold; }
.ln { stroke: #111; stroke-width: 1.7; }
.on { background: linear-gradient(#f8cf9c, #f9b55d 45%, #f6a12f 50%, #fde88e); }
.styles { padding: 3px 0 0 3px; }
.gallery { width: 730px; height: 90px; border: 1px solid #b4cdec; background: #d5e5f8; display: flex; gap: 8px; padding: 4px 0 0 1px; flex: none; }
.sty { width: 96px; height: 72px; margin-top: 4px; background: #fff; display: flex; flex-direction: column; align-items: center; padding: 0 2px; overflow: hidden; color: #00156e; flex: none; }
.sty.sel { width: 103px; height: 80px; margin: 0 -4px 0 0; border: 3px solid #f0b040; border-top-color: #c08050; border-bottom-color: #fad04a; border-radius: 3px; padding: 1px 3px; }
.smp { height: 48px; width: 100%; overflow: hidden; display: flex; align-items: center; font-size: 19px; color: #000; line-height: 40px; flex: none; }
.sn { line-height: 20px; }
.h1 .smp, .h2 .smp { font: bold 27px/40px "Liberation Serif", serif; color: #365f91; }
.h2 .smp { color: #4f81bd; font-size: 26px; }
.tt .smp { font: 47px/44px "Liberation Serif", serif; color: #17365d; align-items: flex-start; }
.tt .smp .fit { margin-top: -3px; }
.st .smp { font: italic 25px/40px "Liberation Serif", serif; color: #4f81bd; }
.em .smp { font-style: italic; color: #808080; }
.gscroll { width: 21px; height: 89px; display: flex; flex-direction: column; flex: none; }
.gscroll b { flex: 1; border: 1px solid #a9c5ea; background: linear-gradient(#dbe8fa, #c3d7f3 50%, #d5e4f9); border-radius: 2px; }
.gscroll .off { background: linear-gradient(#f4f4f4 50%, #e0e3e8); }
.chg { width: 82px; display: flex; flex-direction: column; align-items: center; line-height: 21px; }
.chg > .fit { margin-top: 6px; }
.l2 { display: flex; align-items: center; gap: 3px; padding-left: 2px; }
.elist { flex-direction: column; padding: 0 0 0 4px; }
.elist div { height: 30px; display: flex; align-items: center; gap: 4px; }
.elist .arr { margin: -4px 0 0 1px; }

.work { height: 786px; flex: none; display: flex; justify-content: flex-end; background: radial-gradient(ellipse 330px 260px at 0 0, #bed3f0 0, #a9c4e800 100%), linear-gradient(#a4c2eb, #87a9d7 15%, #6a8fc4 42%, #5a81b7 75%, #5981b6 82%, #6491cf 100%); padding-top: 6px; }
.page { width: 1383px; background: #fff; border: 1px solid #5b6e8c; border-width: 0 1px; box-shadow: 3px 2px 5px #3c5a88; margin: 0 254px 0 0; padding: 4px 0 0 197px; font-size: 21px; flex: none; }
.page p { margin: 0; height: 36px; line-height: 36px; }
.page .off { padding-left: 491px; }
.page .g35 { margin-top: 35px; } .page .g24 { margin-top: 23px; } .page .g59 { margin-top: 59px; } .page .g178 { margin-top: 177px; }
.page .s6, .page .s7 { padding-left: 497px; } .page .s2 { padding-left: 493px; } .page .s4 { padding-left: 494px; }
.vs { width: 26px; background: #a9c6f2; margin-top: -4px; display: flex; flex-direction: column; flex: none; }
.track { margin: 0 1px 0 2px; height: 646px; background: linear-gradient(90deg, #89a5cd, #6f8fbf 30%, #7b9ac8 80%, #9ab4d8); display: flex; flex-direction: column; align-items: center; padding: 9px 0; flex: none; }
.vthumb { margin: 568px 0 16px; width: 22px; height: 22px; border: 1px solid #5b75a5; background: linear-gradient(90deg, #fff, #cddcf0 60%, #eef4fb); display: flex; flex-direction: column; align-items: center; gap: 2px; padding-top: 5px; flex: none; }
.vthumb i { width: 8px; height: 1px; background: #666; flex: none; }

.status { height: 33px; flex: none; border-top: 1px solid #4f74ad; background: linear-gradient(#fff 0 2px, #dce9fb 3px, #c9ddf7 40%, #b5d0f4 45%, #cfe1f9 90%, #a8c2e8); display: flex; color: #15267c; }
.status > div { display: flex; align-items: center; padding-top: 1px; border-right: 1px solid #8fb0de; box-shadow: 1px 0 #fff; }
.st1 { width: 154px; padding-left: 8px; } .st2 { width: 133px; padding-left: 11px; } .st3 { width: 192px; padding-left: 8px; gap: 16px; } .st4 { flex: 1; }
.status .zone { width: 409px; background: linear-gradient(#bfd7f8, #a4c4f1 45%, #82a9df 48%, #7596cc); padding: 0; border: 0; }
.views { display: flex; margin-left: 7px; width: 137px; height: 28px; border: 1px solid #5d84be; border-radius: 3px; background: linear-gradient(#d2e1f6, #b6cdef 50%, #dae8fb); }
.views b { flex: 1; border-right: 1px solid #91afd8; }
.pct { margin-left: 10px; }
.zone > svg { margin-left: 7px; }

.taskbar { height: 60px; flex: none; background: #25211e; display: flex; position: relative; z-index: 1; color: #fff; }
.tk { width: 75px; height: 60px; padding-bottom: 3px; flex: none; }
.tk:first-child { width: 72px; padding-bottom: 0; }
.srch { padding: 0 4px 1px 0; }
.run { border-bottom: 3px solid #76b9ed; padding: 0; width: 61px; margin: 0 7px; }
.r1 { padding-left: 3px; }
.tg { width: 73px; background: #a96126; border-bottom: 3px solid #ff7b00; padding: 7px 0 0 5px; margin-left: 2px; }
.qg { width: 73px; margin-left: 2px; background: linear-gradient(90deg, #4c4a48 66px, #2f2c2a 66px 68px, #45423f 68px); border-bottom: 3px solid #76b9ed; padding: 3px 0 0; }
.tray { margin-left: auto; display: flex; align-items: center; font-size: 17px; width: 467px; }
.lang { margin: -3px 0 0 16px; }
.clock { margin: 0 27px 0 22px; width: 88px; display: flex; flex-direction: column; align-items: center; line-height: 28px; }
.peek { width: 1px; height: 60px; background: #888; margin-left: 29px; }

.dialog { position: absolute; left: 73px; top: 226px; width: 881px; height: 636px; border: 1px solid #4a4a4a; background: #f0f0f0; box-shadow: 2px 6px 20px 1px #0008; display: flex; flex-direction: column; }
.dtitle { height: 44px; background: #fff; display: flex; align-items: center; padding: 0 0 0 11px; font-size: 17px; flex: none; }
.dtitle .fit { margin: 0 30px 0 10px; }
.dtools { height: 48px; display: flex; align-items: center; padding: 0 0 2px 5px; flex: none; }
.dtools b { width: 37.5px; height: 24px; flex: none; }
.dtools svg { width: 22px; height: 22px; overflow: visible; }
.sep { width: 2px; height: 18px; background: #fff; border-left: 1px solid #ddd; margin: 0 4.5px; flex: none; }
.eps { font: bold 24px "Liberation Serif", serif; fill: #5c3566; }
.grid { display: flex; height: 476px; flex: none; padding-left: 2px; }
.tbl { width: 855px; overflow: hidden; background: #fff; font-size: 17.5px; }
.tr { display: flex; height: 45px; width: 1000px; border-bottom: 1px solid #bdbdbd; background: #fff; }
.tr:nth-child(even) { background: #e7e6e3; }
.tr > div { border-right: 1px solid #c8c8c8; display: flex; align-items: center; justify-content: flex-end; padding: 0 4px 2px 0; flex: none; }
.tr > .rh { width: 37px; background: linear-gradient(90deg, #fff, #e9e9e9); border-right: 2px solid #aaa; justify-content: center; padding: 1px 0 0; }
.tr > .c1 { width: 149px; } .tr > .c2 { width: 150px; } .tr > .c3 { width: 150px; } .tr > .c4 { width: 302px; padding-right: 5px; } .tr > .c5 { width: 160px; }
.tr.th { height: 29px; background: linear-gradient(#fff, #ececec); border-bottom: 2px solid #b0b0b0; }
.tr.th > div { justify-content: center; padding: 3px 0 0 1px; overflow: hidden; }
.tr.th > .c5 { justify-content: flex-start; padding-left: 46px; }
.tr.th > .rh { background: none; border: 0; }
.tr.cur > div:not(.rh) { background: #0078d7; color: #fff; border-right-color: #85b9e4; }
.tr.cur > .c1:not(.rh) { border: 3px solid #18d66b; background: #1b7fd1; padding-right: 2px; }
.dv { width: 20px; display: flex; flex-direction: column; border-left: 1px solid #ddd; }
.dv b { height: 20px; background: #fafafa; border-bottom: 1px solid #bbb; }
.dvt { height: 331px; background: #e4e4e4; border-bottom: 1px solid #aaa; }
.dvk { height: 40px; background: #fafafa; }
.dvt2 { flex: 1; background: #e4e4e4; border-top: 1px solid #aaa; border-bottom: 1px solid #aaa; }
.dh { display: flex; height: 21px; margin-left: 2px; flex: none; }
.hl { width: 20px; background: #fff; border-right: 2px solid #c0c0c0; }
.ht { width: 30px; background: #e4e4e4; border-right: 2px solid #b5b5b5; }
.hk { width: 165px; background: linear-gradient(#fff, #f0f0f0); border-right: 2px solid #b5b5b5; }
.hr { width: 618px; background: #e4e4e4; border-right: 1px solid #bbb; }
.hb { width: 22px; background: #fafafa; }
.hc { width: 20px; background: #f0f0f0; border: 1px solid #bbb; border-width: 0 1px 1px 0; }
.dfoot { display: flex; align-items: flex-start; padding: 6px 4px 0 5px; flex: 1; font-size: 17px; }
.allobj { width: 145px; height: 34px; border: 1px solid #a8a8a8; border-radius: 4px; background: linear-gradient(#fff, #efefef); display: flex; align-items: center; padding: 0 0 2px 5px; gap: 5px; }
.dn { margin: 18px 0 0 1px; }
.fmode { margin-left: auto; width: 34px; height: 32px; display: grid; place-items: center; }
.tmode { width: 36px; height: 34px; margin-left: 2px; padding-bottom: 2px; border: 1px solid #a8a8a8; border-radius: 4px; background: #dcdcdc; display: grid; place-items: center; }
```
FILE: app.js
```js
// Attribute table rows: feature number, elevation, time of fix
const fixes = [
  [694, '128,3', '03'], [695, '139,1', '09'], [696, '139,1', '14'], [697, '139,1', '20'], [698, '139,1', '26'],
  [699, '139,1', '31'], [700, '139,1', '36'], [701, '139,1', '42'], [702, '139,1', '48'], [703, '139,1', '54']
];
const table = document.getElementById('tbl');
for (const [n, ele, sec] of fixes) {
  const row = document.createElement('div');
  row.className = n === 698 ? 'tr cur' : 'tr';
  row.innerHTML = `<div class="rh"><span class="fit" data-w="29">${n}</span></div>` +
    `<div class="c1"><span class="fit" data-w="10">0</span></div>` +
    `<div class="c2"><span class="fit" data-w="29">${n - 1}</span></div>` +
    `<div class="c3"><span class="fit" data-w="43">${ele}</span></div>` +
    `<div class="c4"><span class="fit" data-w="204">09.01.2022 12:03:${sec} (UTC)</span></div><div class="c5"></div>`;
  table.append(row);
}

// Set each label to its design width
for (const el of document.querySelectorAll('.fit')) {
  const natural = el.offsetWidth;
  const width = Number(el.dataset.w);
  const margin = parseFloat(getComputedStyle(el).marginRight) || 0;
  el.style.transform = `scaleX(${width / natural})`;
  el.style.marginRight = `${margin + width - natural}px`;
}
```
